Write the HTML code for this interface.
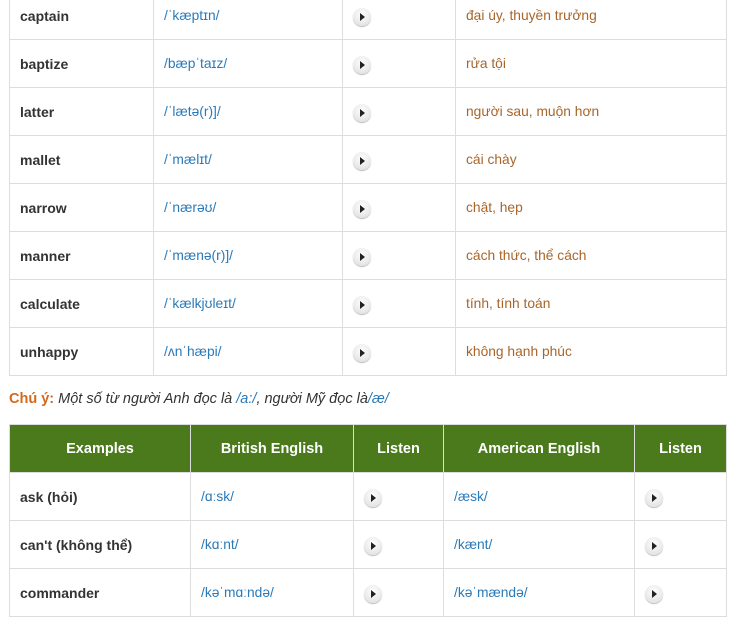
<html><head><style>
body{margin:0;background:#fff;font-family:"Liberation Sans",Arial,sans-serif;font-size:14px;width:739px;height:624px;overflow:hidden;position:relative}
table{border-collapse:collapse;position:absolute;left:9px;table-layout:fixed}
td,th{border:1px solid #ddd;height:48px;padding:0 10px;box-sizing:border-box}
td{vertical-align:top;padding-top:16px;line-height:16px;font-size:13.8px}
td.w{font-weight:bold;color:#333;font-size:14px}
td.p{color:#2a7ab8}
td.v{color:#a8652a}
th{background:#4b7a1d;color:#fff;font-weight:bold;font-size:14.5px;text-align:center;vertical-align:middle}
.b{display:block;width:18px;height:18px;border-radius:50%;background:radial-gradient(circle at 50% 35%,#fff,#e6e6e6 70%,#d4d4d4);box-shadow:0 1px 1px #bbb;position:relative;margin-top:0px}
.b:after{content:"";position:absolute;left:7px;top:5px;border-left:5px solid #222;border-top:4px solid transparent;border-bottom:4px solid transparent}
</style></head><body>
<table style="top:-9px;width:717px">
<colgroup><col style="width:144px"><col style="width:189px"><col style="width:113px"><col style="width:271px"></colgroup>
<tr><td class="w">captain</td><td class="p">/ˈkæptɪn/</td><td><span class="b"></span></td><td class="v">đại úy, thuyền trưởng</td></tr>
<tr><td class="w">baptize</td><td class="p">/bæpˈtaɪz/</td><td><span class="b"></span></td><td class="v">rửa tội</td></tr>
<tr><td class="w">latter</td><td class="p">/ˈlætə(r)]/</td><td><span class="b"></span></td><td class="v">người sau, muộn hơn</td></tr>
<tr><td class="w">mallet</td><td class="p">/ˈmælɪt/</td><td><span class="b"></span></td><td class="v">cái chày</td></tr>
<tr><td class="w">narrow</td><td class="p">/ˈnærəʊ/</td><td><span class="b"></span></td><td class="v">chật, hẹp</td></tr>
<tr><td class="w">manner</td><td class="p">/ˈmænə(r)]/</td><td><span class="b"></span></td><td class="v">cách thức, thể cách</td></tr>
<tr><td class="w">calculate</td><td class="p">/ˈkælkjʊleɪt/</td><td><span class="b"></span></td><td class="v">tính, tính toán</td></tr>
<tr><td class="w">unhappy</td><td class="p">/ʌnˈhæpi/</td><td><span class="b"></span></td><td class="v">không hạnh phúc</td></tr>
</table>
<div style="position:absolute;left:9px;top:391px;color:#333;font-size:14.5px"><b style="color:#d2691e">Chú ý:</b> <i>Một số từ người Anh đọc là <span style="color:#2a7ab8">/a:/</span>, người Mỹ đọc là<span style="color:#2a7ab8">/æ/</span></i></div>
<table style="top:424px;width:717px">
<colgroup><col style="width:181px"><col style="width:163px"><col style="width:90px"><col style="width:191px"><col style="width:92px"></colgroup>
<tr><th>Examples</th><th>British English</th><th>Listen</th><th>American English</th><th>Listen</th></tr>
<tr><td class="w">ask (hỏi)</td><td class="p">/ɑːsk/</td><td><span class="b"></span></td><td class="p">/æsk/</td><td><span class="b"></span></td></tr>
<tr><td class="w">can't (không thể)</td><td class="p">/kɑːnt/</td><td><span class="b"></span></td><td class="p">/kænt/</td><td><span class="b"></span></td></tr>
<tr><td class="w">commander</td><td class="p">/kəˈmɑːndə/</td><td><span class="b"></span></td><td class="p">/kəˈmændə/</td><td><span class="b"></span></td></tr>
</table>
</body></html>
